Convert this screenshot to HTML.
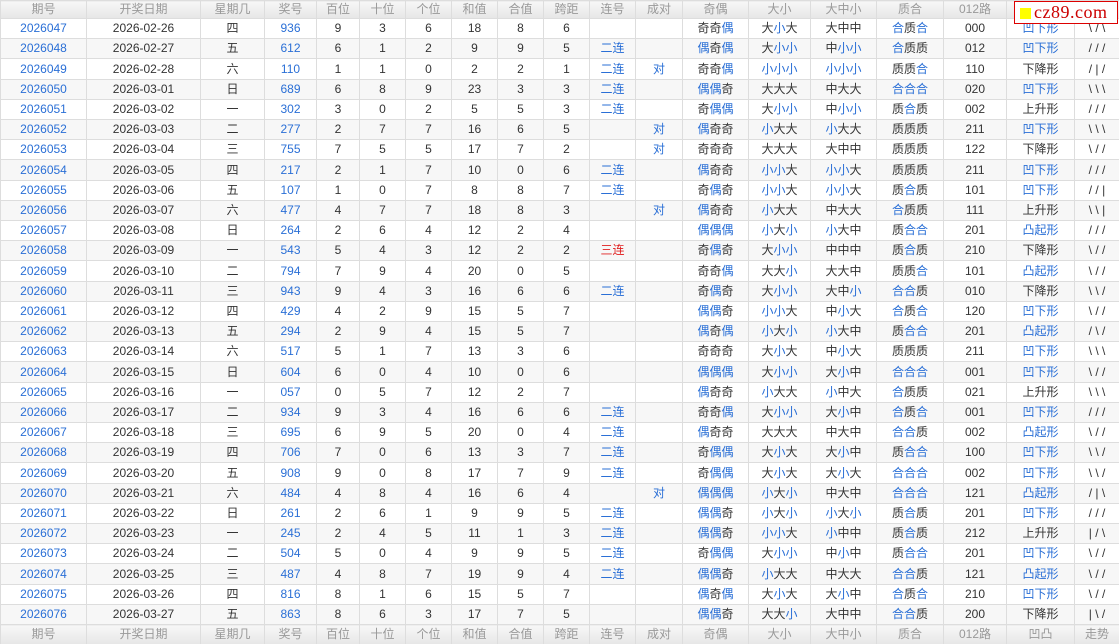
<!DOCTYPE html>
<html><head><meta charset="utf-8">
<style>
html,body{margin:0;padding:0;background:#fff;width:1119px;height:644px;overflow:hidden}
table{border-collapse:collapse;table-layout:fixed;width:1119px;font-family:"Liberation Sans","Noto Sans CJK SC",sans-serif;font-size:12px;color:#333}
td,th{border:1px solid #ddd;text-align:center;padding:0;height:auto;line-height:15px;white-space:nowrap;overflow:hidden}
th{background:linear-gradient(#f7f7f7,#e6e6e6);color:#999;font-weight:normal}
tr:nth-child(even) td{background:#f7f7f7}
.b{color:#2a6fd6}.r{color:#e02020}
.logo{position:absolute;left:1014px;top:1px;width:102px;height:21px;background:#fff;border:1px solid #d00;font-family:"Liberation Serif",serif;font-size:18px;color:#c00;line-height:20px;letter-spacing:0.5px}
.logo i{display:inline-block;width:11px;height:11px;background:#ff0;margin:0 3px 0 5px;vertical-align:-1px}
</style></head><body>
<table id="t">
<colgroup><col style="width:86px"><col style="width:114px"><col style="width:64px"><col style="width:52px"><col style="width:43px"><col style="width:46px"><col style="width:46px"><col style="width:46px"><col style="width:46px"><col style="width:46px"><col style="width:46px"><col style="width:47px"><col style="width:66px"><col style="width:62px"><col style="width:66px"><col style="width:67px"><col style="width:63px"><col style="width:68px"><col style="width:45px"></colgroup>
<thead><tr style="height:18px"><th>期号</th><th>开奖日期</th><th>星期几</th><th>奖号</th><th>百位</th><th>十位</th><th>个位</th><th>和值</th><th>合值</th><th>跨距</th><th>连号</th><th>成对</th><th>奇偶</th><th>大小</th><th>大中小</th><th>质合</th><th>012路</th><th>凹凸</th><th>走势</th></tr></thead>
<tbody id="b"></tbody>
<tfoot><tr style="height:20px"><th>期号</th><th>开奖日期</th><th>星期几</th><th>奖号</th><th>百位</th><th>十位</th><th>个位</th><th>和值</th><th>合值</th><th>跨距</th><th>连号</th><th>成对</th><th>奇偶</th><th>大小</th><th>大中小</th><th>质合</th><th>012路</th><th>凹凸</th><th>走势</th></tr></tfoot>
</table>
<div class="logo"><i></i>cz89.com</div>
<script>
var d=`047 02-26 四 936 9 3 6 18 8 6 - - 奇奇偶 大小大 大中中 合质合 000 凹下形 \\/\\
048 02-27 五 612 6 1 2 9 9 5 二连 - 偶奇偶 大小小 中小小 合质质 012 凹下形 ///
049 02-28 六 110 1 1 0 2 2 1 二连 对 奇奇偶 小小小 小小小 质质合 110 下降形 /|/
050 03-01 日 689 6 8 9 23 3 3 二连 - 偶偶奇 大大大 中大大 合合合 020 凹下形 \\\\\\
051 03-02 一 302 3 0 2 5 5 3 二连 - 奇偶偶 大小小 中小小 质合质 002 上升形 ///
052 03-03 二 277 2 7 7 16 6 5 - 对 偶奇奇 小大大 小大大 质质质 211 凹下形 \\\\\\
053 03-04 三 755 7 5 5 17 7 2 - 对 奇奇奇 大大大 大中中 质质质 122 下降形 \\//
054 03-05 四 217 2 1 7 10 0 6 二连 - 偶奇奇 小小大 小小大 质质质 211 凹下形 ///
055 03-06 五 107 1 0 7 8 8 7 二连 - 奇偶奇 小小大 小小大 质合质 101 凹下形 //|
056 03-07 六 477 4 7 7 18 8 3 - 对 偶奇奇 小大大 中大大 合质质 111 上升形 \\\\|
057 03-08 日 264 2 6 4 12 2 4 - - 偶偶偶 小大小 小大中 质合合 201 凸起形 ///
058 03-09 一 543 5 4 3 12 2 2 三连 - 奇偶奇 大小小 中中中 质合质 210 下降形 \\//
059 03-10 二 794 7 9 4 20 0 5 - - 奇奇偶 大大小 大大中 质质合 101 凸起形 \\//
060 03-11 三 943 9 4 3 16 6 6 二连 - 奇偶奇 大小小 大中小 合合质 010 下降形 \\\\/
061 03-12 四 429 4 2 9 15 5 7 - - 偶偶奇 小小大 中小大 合质合 120 凹下形 \\//
062 03-13 五 294 2 9 4 15 5 7 - - 偶奇偶 小大小 小大中 质合合 201 凸起形 /\\/
063 03-14 六 517 5 1 7 13 3 6 - - 奇奇奇 大小大 中小大 质质质 211 凹下形 \\\\\\
064 03-15 日 604 6 0 4 10 0 6 - - 偶偶偶 大小小 大小中 合合合 001 凹下形 \\//
065 03-16 一 057 0 5 7 12 2 7 - - 偶奇奇 小大大 小中大 合质质 021 上升形 \\\\\\
066 03-17 二 934 9 3 4 16 6 6 二连 - 奇奇偶 大小小 大小中 合质合 001 凹下形 ///
067 03-18 三 695 6 9 5 20 0 4 二连 - 偶奇奇 大大大 中大中 合合质 002 凸起形 \\//
068 03-19 四 706 7 0 6 13 3 7 二连 - 奇偶偶 大小大 大小中 质合合 100 凹下形 \\\\/
069 03-20 五 908 9 0 8 17 7 9 二连 - 奇偶偶 大小大 大小大 合合合 002 凹下形 \\\\/
070 03-21 六 484 4 8 4 16 6 4 - 对 偶偶偶 小大小 中大中 合合合 121 凸起形 /|\\
071 03-22 日 261 2 6 1 9 9 5 二连 - 偶偶奇 小大小 小大小 质合质 201 凹下形 ///
072 03-23 一 245 2 4 5 11 1 3 二连 - 偶偶奇 小小大 小中中 质合质 212 上升形 |/\\
073 03-24 二 504 5 0 4 9 9 5 二连 - 奇偶偶 大小小 中小中 质合合 201 凹下形 \\//
074 03-25 三 487 4 8 7 19 9 4 二连 - 偶偶奇 小大大 中大大 合合质 121 凸起形 \\//
075 03-26 四 816 8 1 6 15 5 7 - - 偶奇偶 大小大 大小中 合质合 210 凹下形 \\//
076 03-27 五 863 8 6 3 17 7 5 - - 偶偶奇 大大小 大中中 合合质 200 下降形 |\\/`;
function col(s,blue){return s.split('').map(function(c){return blue.indexOf(c)>=0?'<span class="b">'+c+'</span>':c}).join('')}
var h='',prev=18;
d.split('\n').forEach(function(l,k){var a=l.trim().split(' ');
var end=Math.round(18+(k+1)*20.2),ht=end-prev;prev=end;
h+='<tr style="height:'+ht+'px"><td class="b">2026'+a[0]+'</td><td>2026-'+a[1]+'</td><td>'+a[2]+'</td><td class="b">'+a[3]+'</td>';
for(var i=4;i<10;i++)h+='<td>'+a[i]+'</td>';
h+='<td class="'+(a[10]=='三连'?'r':'b')+'">'+(a[10]=='-'?'':a[10])+'</td>';
h+='<td class="b">'+(a[11]=='-'?'':a[11])+'</td>';
h+='<td>'+col(a[12],'偶')+'</td><td>'+col(a[13],'小')+'</td><td>'+col(a[14],'小')+'</td><td>'+col(a[15],'合')+'</td><td>'+a[16]+'</td>';
h+='<td'+(a[17][0]=='凹'||a[17][0]=='凸'?' class="b"':'')+'>'+a[17]+'</td><td>'+a[18].split('').join(' ')+'</td></tr>';});
document.getElementById('b').innerHTML=h;
</script>
</body></html>
